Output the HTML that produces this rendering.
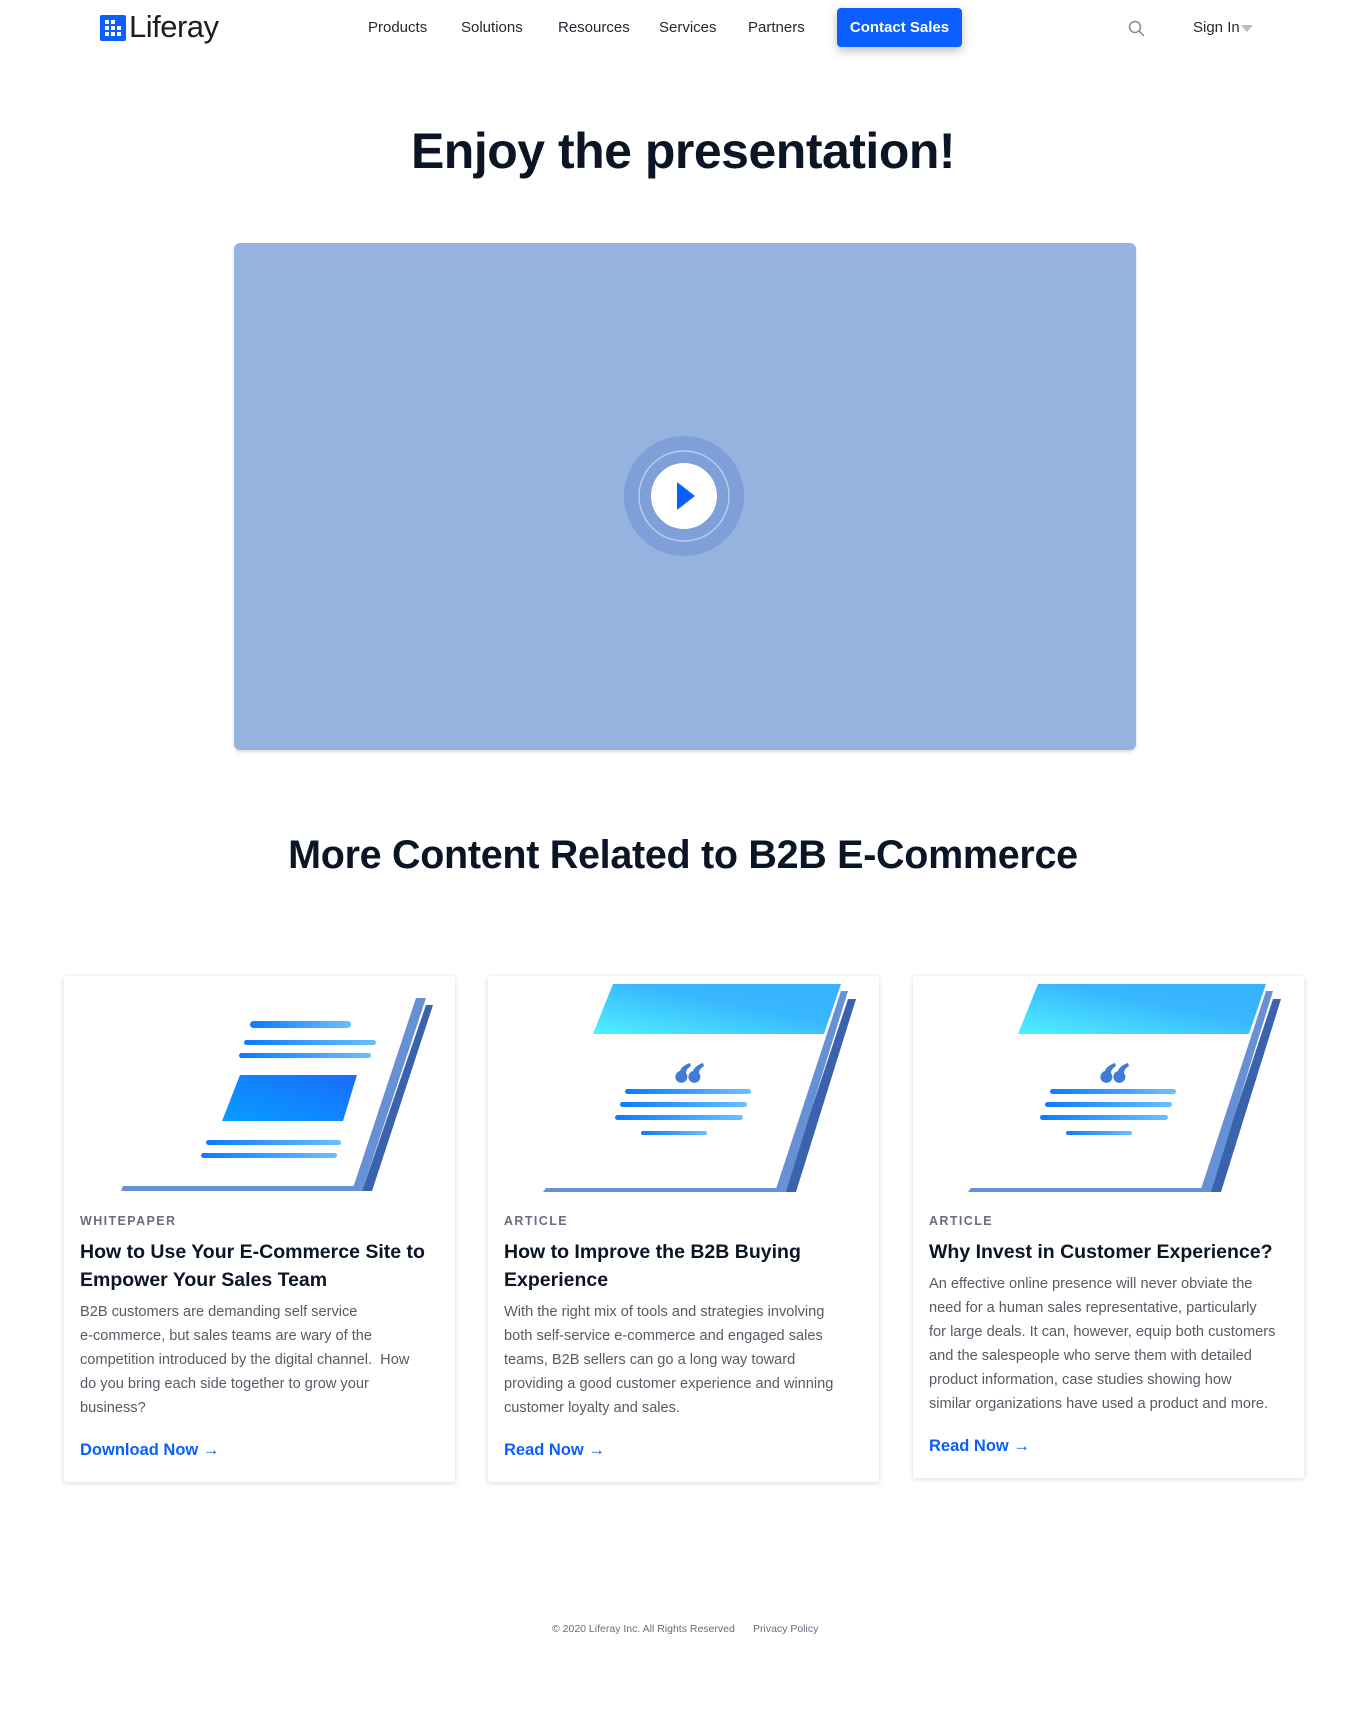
<!DOCTYPE html>
<html><head><meta charset="utf-8"><style>
*{margin:0;padding:0;box-sizing:border-box}
body{width:1366px;height:1709px;background:#fff;font-family:"Liberation Sans",sans-serif;color:#0b1526;position:relative;overflow:hidden}
.abs{position:absolute}
.nav a{position:absolute;top:19px;font-size:15px;color:#272833;text-decoration:none}
.btn{left:837px;top:8px;width:125px;height:39px;background:#0b5fff;color:#fff;border-radius:4px;font-size:15px;font-weight:bold;text-align:center;line-height:39px;box-shadow:0 4px 10px rgba(0,0,0,.25)}
h1{position:absolute;left:0;width:1366px;text-align:center;top:122px;font-size:50px;font-weight:bold;letter-spacing:-0.5px}
h2{position:absolute;left:0;width:1366px;text-align:center;top:833px;font-size:39.5px;font-weight:bold;letter-spacing:-0.3px}
.video{left:234px;top:243px;width:902px;height:507px;background:#96b3e0;border-radius:6px;box-shadow:0 2px 3px rgba(0,0,0,.15)}
.card{position:absolute;top:976px;width:391px;height:506px;background:#fff;box-shadow:0 1px 6px rgba(0,0,0,.15);border-radius:2px}
.card svg{position:absolute;left:0;top:0}
.cat{position:absolute;left:16px;top:238px;font-size:12.5px;letter-spacing:1.4px;color:#6b6c7e;font-weight:bold}
.tt{position:absolute;left:16px;top:262px;width:365px;font-size:19.5px;line-height:28px;font-weight:bold;color:#0b1526}
.bd{position:absolute;left:16px;width:362px;font-size:14.6px;line-height:24px;color:#585a66}
.lk{position:absolute;left:16px;font-size:16.5px;font-weight:bold;color:#0b5fff}
.ft{position:absolute;top:1623px;font-size:10.5px;color:#6b6c7e}
</style></head><body>
<svg class="abs" style="left:100px;top:15px" width="26" height="26" viewBox="0 0 26 26"><rect width="26" height="26" rx="2" fill="#0b5fff"/><g fill="#fff"><rect x="5" y="5" width="4" height="4"/><rect x="11" y="5" width="4" height="4"/><rect x="5" y="11" width="4" height="4"/><rect x="11" y="11" width="4" height="4"/><rect x="17" y="11" width="4" height="4"/><rect x="5" y="17" width="4" height="4"/><rect x="11" y="17" width="4" height="4"/><rect x="17" y="17" width="4" height="4"/></g></svg>
<div class="abs" style="left:129px;top:9px;font-size:31px;color:#1c1c24;letter-spacing:-0.5px">Liferay</div>
<div class="nav">
<a style="left:368px">Products</a><a style="left:461px">Solutions</a><a style="left:558px">Resources</a><a style="left:659px">Services</a><a style="left:748px">Partners</a>
</div>
<div class="abs btn">Contact Sales</div>
<svg class="abs" style="left:1128px;top:20px" width="17" height="17" viewBox="0 0 17 17"><circle cx="7" cy="7" r="5.5" fill="none" stroke="#888" stroke-width="1.5"/><path d="M11 11l5 5" stroke="#888" stroke-width="1.5"/></svg>
<div class="abs" style="left:1193px;top:19px;font-size:15px;color:#272833">Sign In</div>
<svg class="abs" style="left:1241px;top:25px" width="12" height="8"><path d="M0 0h12L6 7z" fill="#bbb"/></svg>

<h1>Enjoy the presentation!</h1>
<div class="abs video"></div>
<svg class="abs" style="left:624px;top:436px" width="120" height="120" viewBox="0 0 120 120"><circle cx="60" cy="60" r="60" fill="#7e9fd8"/><circle cx="60" cy="60" r="45" fill="none" stroke="#b7cbed" stroke-width="1.5"/><circle cx="60" cy="60" r="33" fill="#fff"/><path d="M53 46v28l18-14z" fill="#0b5fff"/></svg>

<h2>More Content Related to B2B E-Commerce</h2>

<svg width="0" height="0" style="position:absolute"><defs>
<linearGradient id="lg" x1="0" x2="1" y1="0" y2="0"><stop offset="0" stop-color="#0b7bff"/><stop offset="1" stop-color="#6ac0ff"/></linearGradient>
<linearGradient id="pg" x1="0" y1="1" x2="1" y2="0"><stop offset="0" stop-color="#079dff"/><stop offset="1" stop-color="#1a6bff"/></linearGradient>
<linearGradient id="cg" x1="0" y1="1" x2="1" y2="0"><stop offset="0" stop-color="#4ef0ff"/><stop offset=".6" stop-color="#38b6ff"/><stop offset="1" stop-color="#38b0ff"/></linearGradient>
</defs></svg>

<div class="card" style="left:64px">
<svg width="391" height="230" viewBox="0 0 391 230"><g transform="translate(0,7)">
<path d="M362 22h7L308 208H298z" fill="#3a62ad"/>
<path d="M352 15h10L298 208H288z" fill="#6691d6"/>
<path d="M57 208L59 203H292V208z" fill="#6691d6"/>
<g fill="url(#lg)"><rect x="186" y="38" width="101" height="7" rx="3.5"/><rect x="180" y="57" width="132" height="5" rx="2.5"/><rect x="175" y="70" width="132" height="5" rx="2.5"/><rect x="142" y="157" width="135" height="5" rx="2.5"/><rect x="137" y="170" width="136" height="5" rx="2.5"/></g>
<path d="M176 92H293L279 138H158z" fill="url(#pg)"/>
</g></svg>
<div class="cat">WHITEPAPER</div>
<div class="tt">How to Use Your E-Commerce Site to Empower Your Sales Team</div>
<div class="bd" style="top:324px">B2B customers are demanding self service<br>e-commerce, but sales teams are wary of the<br>competition introduced by the digital channel.&nbsp; How<br>do you bring each side together to grow your<br>business?</div>
<div class="lk" style="top:465px">Download Now →</div>
</div>

<div class="card" style="left:488px">
<svg width="391" height="230" viewBox="0 0 391 230">
<path d="M360 23h8L308 216H296z" fill="#3a62ad"/>
<path d="M353 15h7L298 216H287z" fill="#6691d6"/>
<path d="M55 216L58 212H292V216z" fill="#6691d6"/>
<path d="M125 8H353L336 58H105z" fill="url(#cg)"/>
<g fill="#3f7bd6"><path d="M202 87c-6 2-9 5-10 8a6 6 0 1 0 6 2c0-3 2-5 5-7z"/><path d="M215 87c-6 2-9 5-10 8a6 6 0 1 0 6 2c0-3 2-5 5-7z"/></g>
<g fill="url(#lg)"><rect x="137" y="113" width="126" height="5" rx="2.5"/><rect x="132" y="126" width="127" height="5" rx="2.5"/><rect x="127" y="139" width="128" height="5" rx="2.5"/><rect x="153" y="155" width="66" height="4" rx="2"/></g>
</svg>
<div class="cat">ARTICLE</div>
<div class="tt">How to Improve the B2B Buying Experience</div>
<div class="bd" style="top:324px">With the right mix of tools and strategies involving<br>both self-service e-commerce and engaged sales<br>teams, B2B sellers can go a long way toward<br>providing a good customer experience and winning<br>customer loyalty and sales.</div>
<div class="lk" style="top:465px">Read Now →</div>
</div>

<div class="card" style="left:913px;height:502px">
<svg width="391" height="230" viewBox="0 0 391 230">
<path d="M360 23h8L308 216H296z" fill="#3a62ad"/>
<path d="M353 15h7L298 216H287z" fill="#6691d6"/>
<path d="M55 216L58 212H292V216z" fill="#6691d6"/>
<path d="M125 8H353L336 58H105z" fill="url(#cg)"/>
<g fill="#3f7bd6"><path d="M202 87c-6 2-9 5-10 8a6 6 0 1 0 6 2c0-3 2-5 5-7z"/><path d="M215 87c-6 2-9 5-10 8a6 6 0 1 0 6 2c0-3 2-5 5-7z"/></g>
<g fill="url(#lg)"><rect x="137" y="113" width="126" height="5" rx="2.5"/><rect x="132" y="126" width="127" height="5" rx="2.5"/><rect x="127" y="139" width="128" height="5" rx="2.5"/><rect x="153" y="155" width="66" height="4" rx="2"/></g>
</svg>
<div class="cat">ARTICLE</div>
<div class="tt">Why Invest in Customer Experience?</div>
<div class="bd" style="top:296px">An effective online presence will never obviate the<br>need for a human sales representative, particularly<br>for large deals. It can, however, equip both customers<br>and the salespeople who serve them with detailed<br>product information, case studies showing how<br>similar organizations have used a product and more.</div>
<div class="lk" style="top:461px">Read Now →</div>
</div>

<div class="ft" style="left:552px">© 2020 Liferay Inc. All Rights Reserved</div>
<div class="ft" style="left:753px">Privacy Policy</div>
</body></html>
